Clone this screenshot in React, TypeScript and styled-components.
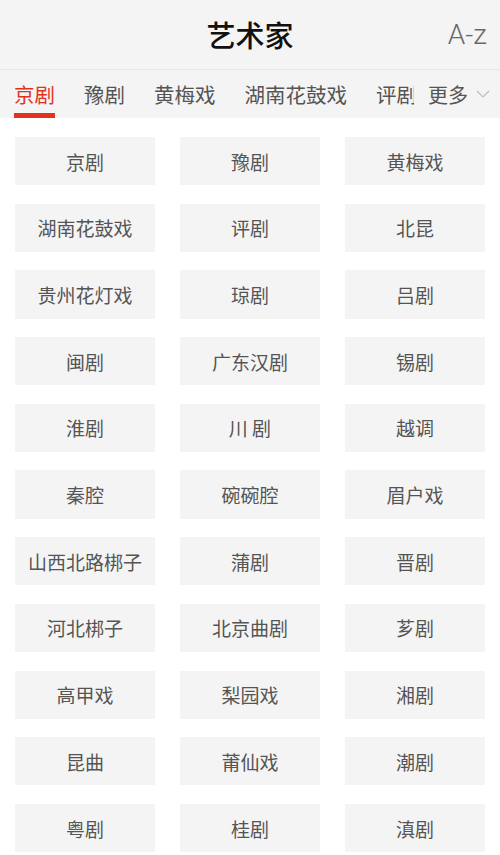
import React from "react";
import styled, { createGlobalStyle } from "styled-components";

const Global = createGlobalStyle`
  html, body { margin: 0; padding: 0; background: #ffffff; }
  body { font-family: "Noto Sans CJK SC", "Noto Sans", sans-serif; }
  * { box-sizing: border-box; }
`;

const Page = styled.div`
  width: 500px;
  height: 855px;
  overflow: hidden;
  background: #ffffff;
`;

const Header = styled.header`
  position: relative;
  height: 70px;
  background: #f4f4f4;
  border-bottom: 1px solid #e6e6e6;
  display: flex;
  align-items: center;
  justify-content: center;
`;

const Title = styled.h1`
  margin: 0;
  font-size: 29px;
  font-weight: 500;
  color: #111111;
  line-height: 1;
`;

const AzButton = styled.span`
  position: absolute;
  right: 13px;
  top: 50%;
  transform: translateY(-52%);
  font-family: Roboto, "Noto Sans", sans-serif;
  font-weight: 300;
  font-size: 28px;
  color: #6a6a6a;
`;

const TabBar = styled.nav`
  height: 48px;
  background: #f4f4f4;
  display: flex;
`;

const TabList = styled.div`
  flex: 1;
  min-width: 0;
  overflow: hidden;
  display: flex;
  gap: 29px;
  padding-left: 14px;
  white-space: nowrap;
`;

const Tab = styled.div<{ $active?: boolean }>`
  position: relative;
  flex: none;
  height: 48px;
  display: flex;
  align-items: center;
  padding-bottom: 1px;
  font-size: 20.5px;
  color: ${(p) => (p.$active ? "#e2321f" : "#555555")};
  &::after {
    content: "";
    display: ${(p) => (p.$active ? "block" : "none")};
    position: absolute;
    left: 0;
    right: 0;
    bottom: 0;
    height: 5px;
    background: #e2321f;
  }
`;

const More = styled.div`
  flex: none;
  width: 86px;
  height: 48px;
  display: flex;
  align-items: center;
  padding-left: 14px;
  gap: 8px;
  background: #f4f4f4;
  font-size: 20px;
  color: #555555;
`;

const Grid = styled.div`
  display: grid;
  grid-template-columns: repeat(3, 140px);
  grid-auto-rows: 48.3px;
  column-gap: 25px;
  row-gap: 18.4px;
  padding: 19px 15px 0;
`;

const Cell = styled.div`
  background: #f4f4f4;
  display: flex;
  align-items: center;
  justify-content: center;
  font-size: 19px;
  color: #555555;
`;

const Chevron = () => (
  <svg width="14" height="8" viewBox="0 0 14 8" fill="none">
    <path d="M1 1 L7 7 L13 1" stroke="#bdbdbd" strokeWidth="1.2" />
  </svg>
);

const tabs = ["京剧", "豫剧", "黄梅戏", "湖南花鼓戏", "评剧"];

const items = [
  "京剧", "豫剧", "黄梅戏",
  "湖南花鼓戏", "评剧", "北昆",
  "贵州花灯戏", "琼剧", "吕剧",
  "闽剧", "广东汉剧", "锡剧",
  "淮剧", "川 剧", "越调",
  "秦腔", "碗碗腔", "眉户戏",
  "山西北路梆子", "蒲剧", "晋剧",
  "河北梆子", "北京曲剧", "芗剧",
  "高甲戏", "梨园戏", "湘剧",
  "昆曲", "莆仙戏", "潮剧",
  "粤剧", "桂剧", "滇剧",
];

export default function App() {
  return (
    <Page>
      <Global />
      <Header>
        <Title>艺术家</Title>
        <AzButton>A-z</AzButton>
      </Header>
      <TabBar>
        <TabList>
          {tabs.map((t, i) => (
            <Tab key={t} $active={i === 0}>
              {t}
            </Tab>
          ))}
        </TabList>
        <More>
          更多
          <Chevron />
        </More>
      </TabBar>
      <Grid>
        {items.map((it, i) => (
          <Cell key={i}>{it}</Cell>
        ))}
      </Grid>
    </Page>
  );
}
